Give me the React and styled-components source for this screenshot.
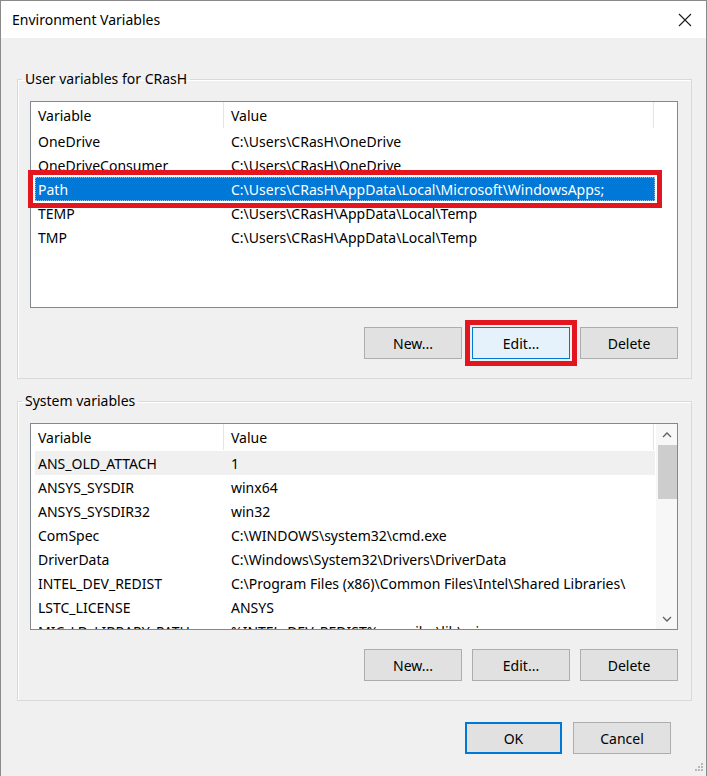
import styled, { createGlobalStyle } from "styled-components";

const GlobalStyle = createGlobalStyle`
  html, body {
    margin: 0;
    padding: 0;
    background: #ffffff;
  }
  body {
    font-family: "Noto Sans", "Open Sans", "Liberation Sans", sans-serif;
    font-size: 14px;
    color: #000000;
  }
`;

const userVars = [
  { name: "OneDrive", value: "C:\\Users\\CRasH\\OneDrive" },
  { name: "OneDriveConsumer", value: "C:\\Users\\CRasH\\OneDrive" },
  { name: "Path", value: "C:\\Users\\CRasH\\AppData\\Local\\Microsoft\\WindowsApps;", selected: true, marked: true },
  { name: "TEMP", value: "C:\\Users\\CRasH\\AppData\\Local\\Temp" },
  { name: "TMP", value: "C:\\Users\\CRasH\\AppData\\Local\\Temp" },
];

const systemVars = [
  { name: "ANS_OLD_ATTACH", value: "1", dimmed: true },
  { name: "ANSYS_SYSDIR", value: "winx64" },
  { name: "ANSYS_SYSDIR32", value: "win32" },
  { name: "ComSpec", value: "C:\\WINDOWS\\system32\\cmd.exe" },
  { name: "DriverData", value: "C:\\Windows\\System32\\Drivers\\DriverData" },
  { name: "INTEL_DEV_REDIST", value: "C:\\Program Files (x86)\\Common Files\\Intel\\Shared Libraries\\" },
  { name: "LSTC_LICENSE", value: "ANSYS" },
  { name: "MIC_LD_LIBRARY_PATH", value: "%INTEL_DEV_REDIST%compiler\\lib\\mic" },
];

const Window = styled.div`
  width: 707px;
  height: 776px;
  box-sizing: border-box;
  border: 1px solid #8a8a8a;
  border-bottom: none;
  background: #f0f0f0;
  display: flex;
  flex-direction: column;
  position: relative;
  overflow: hidden;
`;

const TitleBar = styled.div`
  height: 37px;
  background: #ffffff;
  display: flex;
  align-items: center;
  justify-content: space-between;
  padding: 0 14px 0 11px;
  flex-shrink: 0;
`;

const Title = styled.span`
  font-size: 14px;
`;

const Body = styled.div`
  flex: 1;
  display: flex;
  flex-direction: column;
  padding: 31px 14px 0 16px;
`;

const Group = styled.fieldset`
  margin: 0;
  padding: 12px 13px 19px 12px;
  border: 1px solid #d9d9d9;
  box-shadow: inset 1px 1px 0 #ffffff;
  min-width: 0;
  & + & {
    margin-top: 12px;
  }
`;

const Legend = styled.legend`
  margin-left: -8px;
  padding: 0 3px;
  line-height: 20px;
  font-size: 14px;
`;

const ListBox = styled.div`
  height: 207px;
  box-sizing: border-box;
  border: 1px solid #828790;
  background: #ffffff;
  display: flex;
  overflow: ${(p) => (p.$clip ? "hidden" : "visible")};
`;

const ListContent = styled.div`
  flex: 1;
  min-width: 0;
  overflow: ${(p) => (p.$clip ? "hidden" : "visible")};
`;

const HeaderRow = styled.div`
  display: grid;
  grid-template-columns: 193px 430px;
  height: 27px;
`;

const HeaderCell = styled.div`
  display: flex;
  align-items: center;
  padding-left: 7px;
  border-right: 1px solid #e5e5e5;
  height: 26px;
`;

const Row = styled.div`
  display: grid;
  grid-template-columns: 189px 431px;
  width: 620px;
  height: 24px;
  margin-left: 4px;
  background: ${(p) => (p.$selected ? "#0078d7" : p.$dimmed ? "#f0f0f0" : "transparent")};
  color: ${(p) => (p.$selected ? "#ffffff" : "#000000")};
  outline: ${(p) => (p.$marked ? "5px solid #e3161f" : "none")};
  outline-offset: 2px;
  position: relative;

  &::after {
    content: "";
    display: ${(p) => (p.$selected ? "block" : "none")};
    position: absolute;
    inset: 0;
    border: 1px dotted rgba(255, 255, 255, 0.55);
    pointer-events: none;
  }
`;

const Cell = styled.div`
  display: flex;
  align-items: center;
  padding-left: ${(p) => (p.$value ? "7px" : "3px")};
  padding-top: 1px;
  white-space: nowrap;
  overflow: hidden;
`;

const ScrollBar = styled.div`
  width: 21px;
  background: #f7f7f7;
  display: flex;
  flex-direction: column;
  align-items: center;
`;

const ScrollArrow = styled.div`
  height: 21px;
  width: 100%;
  display: flex;
  align-items: center;
  justify-content: center;
`;

const ScrollThumb = styled.div`
  width: 19px;
  height: 54px;
  margin-left: 1px;
  background: #cdcdcd;
`;

const ScrollTrack = styled.div`
  flex: 1;
`;

const ButtonRow = styled.div`
  display: flex;
  justify-content: flex-end;
  gap: 10px;
  margin-top: 19px;
`;

const Button = styled.button`
  width: ${(p) => p.$width || 98}px;
  height: 32px;
  box-sizing: border-box;
  font-family: inherit;
  font-size: 14px;
  color: #000000;
  background: ${(p) => (p.$hot ? "#e5f1fb" : "#e1e1e1")};
  border: ${(p) => (p.$default ? "2px solid #0078d7" : p.$hot ? "1px solid #0078d7" : "1px solid #adadad")};
  outline: ${(p) => (p.$marked ? "5px solid #e3161f" : "none")};
  outline-offset: 2px;
  padding: 0;
  cursor: default;
`;

const Footer = styled.div`
  display: flex;
  justify-content: flex-end;
  gap: 11px;
  margin-top: 21px;
  padding-right: 21px;
`;

const Grip = styled.svg`
  position: absolute;
  right: 2px;
  bottom: 4px;
`;

function CloseIcon() {
  return (
    <svg width="14" height="14" viewBox="0 0 14 14">
      <path d="M1 1 L13 13 M13 1 L1 13" stroke="#1a1a1a" strokeWidth="1.1" fill="none" />
    </svg>
  );
}

function Chevron({ up }) {
  return (
    <svg width="10" height="6" viewBox="0 0 10 6">
      <path
        d={up ? "M1 5 L5 1 L9 5" : "M1 1 L5 5 L9 1"}
        stroke="#606060"
        strokeWidth="1.3"
        fill="none"
      />
    </svg>
  );
}

function VariableList({ rows, scroll }) {
  return (
    <ListBox $clip={scroll}>
      <ListContent $clip={scroll}>
        <HeaderRow>
          <HeaderCell>Variable</HeaderCell>
          <HeaderCell>Value</HeaderCell>
        </HeaderRow>
        {rows.map((row) => (
          <Row key={row.name} $selected={row.selected} $dimmed={row.dimmed} $marked={row.marked}>
            <Cell>{row.name}</Cell>
            <Cell $value>{row.value}</Cell>
          </Row>
        ))}
      </ListContent>
      {scroll && (
        <ScrollBar>
          <ScrollArrow>
            <Chevron up />
          </ScrollArrow>
          <ScrollThumb />
          <ScrollTrack />
          <ScrollArrow>
            <Chevron />
          </ScrollArrow>
        </ScrollBar>
      )}
    </ListBox>
  );
}

export default function App() {
  return (
    <>
      <GlobalStyle />
      <Window>
        <TitleBar>
          <Title>Environment Variables</Title>
          <CloseIcon />
        </TitleBar>
        <Body>
          <Group>
            <Legend>User variables for CRasH</Legend>
            <VariableList rows={userVars} />
            <ButtonRow>
              <Button>New...</Button>
              <Button $hot $marked>Edit...</Button>
              <Button>Delete</Button>
            </ButtonRow>
          </Group>
          <Group>
            <Legend>System variables</Legend>
            <VariableList rows={systemVars} scroll />
            <ButtonRow>
              <Button>New...</Button>
              <Button>Edit...</Button>
              <Button>Delete</Button>
            </ButtonRow>
          </Group>
          <Footer>
            <Button $default $width={97}>OK</Button>
            <Button>Cancel</Button>
          </Footer>
        </Body>
        <Grip width="10" height="10" viewBox="0 0 10 10">
          {[[8, 2], [8, 5], [5, 5], [8, 8], [5, 8], [2, 8]].map(([x, y]) => (
            <rect key={`${x}-${y}`} x={x - 1} y={y - 1} width="2" height="2" fill="#b8b8b8" />
          ))}
        </Grip>
      </Window>
    </>
  );
}
